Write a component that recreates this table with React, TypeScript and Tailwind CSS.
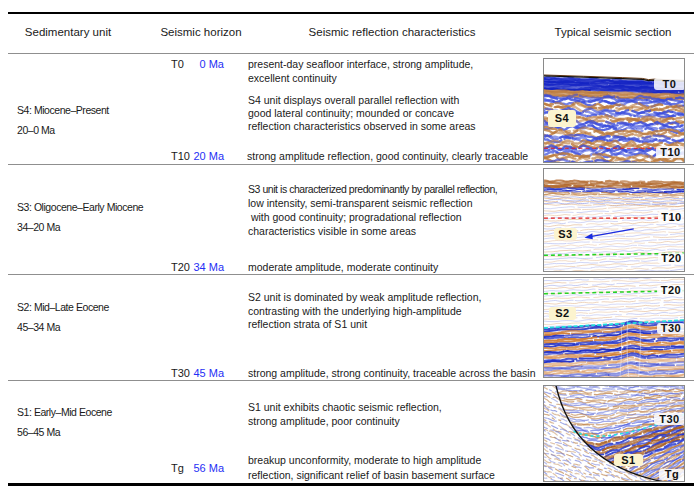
import React from "react";

// ---------- seismic texture helpers ----------
type Style = { c: string; o: number; w: number } | null;
type Seg = { d: string; c: string; o: number; w: number };

function rand(seed: number) {
  let s = seed >>> 0;
  return () => {
    s = (s + 0x6d2b79f5) >>> 0;
    let t = s;
    t = Math.imul(t ^ (t >>> 15), t | 1);
    t ^= t + Math.imul(t ^ (t >>> 7), t | 61);
    return ((t ^ (t >>> 14)) >>> 0) / 4294967296;
  };
}

function strata(
  r: () => number,
  o: {
    W: number;
    from: number;
    to: number;
    step: number;
    base: (y0: number, x: number) => number;
    style: (y0: number, k: number) => Style;
    jit: number;
    wave?: number;
    seg?: [number, number];
    gap?: [number, number];
  }
): Seg[] {
  const out: Seg[] = [];
  const [s0, s1] = o.seg ?? [14, 40];
  const [g0, g1] = o.gap ?? [0, 3];
  let k = 0;
  for (let y0 = o.from; y0 <= o.to; y0 += o.step, k++) {
    const st = o.style(y0, k);
    if (!st) continue;
    const ph = r() * 6.28;
    const fr = 0.15 + r() * 0.25;
    let x = -3 + r() * 3;
    let v = 0;
    while (x < o.W + 2) {
      const len = s0 + r() * (s1 - s0);
      const pts: string[] = [];
      for (let xx = x; xx <= Math.min(x + len, o.W + 3); xx += 2) {
        // smoothed random walk keeps the wiggles correlated
        v = v * 0.75 + (r() - 0.5) * o.jit;
        const y = o.base(y0, xx) + (o.wave ?? 0.8) * Math.sin(xx * fr + ph) + v;
        pts.push(`${xx.toFixed(1)} ${y.toFixed(1)}`);
      }
      if (pts.length > 1) out.push({ d: "M" + pts.join(" L"), c: st.c, o: st.o * (0.65 + r() * 0.35), w: st.w });
      x += len + g0 + r() * (g1 - g0);
    }
  }
  return out;
}

function Paths({ segs }: { segs: Seg[] }) {
  return (
    <>
      {segs.map((s, i) => (
        <path
          key={i}
          d={s.d}
          fill="none"
          stroke={s.c}
          strokeOpacity={s.o}
          strokeWidth={s.w}
          strokeLinecap="round"
          strokeLinejoin="round"
        />
      ))}
    </>
  );
}

const BLUE = "#3a4cdc";
const BLUE_D = "#1524c4";
const BROWN = "#bb7a3c";
const ORANGE = "#d07a2e";
const LBLUE = "#8b96e6";
const LBROWN = "#dca676";

// S4 section
const r1 = rand(11);
const seg1 = [
  ...strata(r1, {
    W: 142, from: 19, to: 38, step: 1.3,
    base: (y0, x) => y0 + x * 0.035 * (1 - (y0 - 17) / 120),
    style: (y0) => (y0 < 31 ? { c: BLUE_D, o: 1, w: 2.2 } : { c: BROWN, o: 0.9, w: 2.2 }),
    jit: 0.4, wave: 0.3, seg: [40, 90], gap: [0, 1],
  }),
  ...strata(r1, {
    W: 142, from: 38, to: 110, step: 2,
    base: (y0, x) => y0 + x * 0.02,
    style: (y0) => {
      const b = Math.floor((y0 - 38) / 6.5) % 2;
      return b === 0 ? { c: BLUE, o: 0.85, w: 2.4 } : { c: BROWN, o: 0.85, w: 2.4 };
    },
    jit: 1.6, wave: 1.5, seg: [8, 22], gap: [0, 3],
  }),
];

// S3 section
const r2 = rand(23);
const seg2 = [
  ...strata(r2, {
    W: 142, from: 36, to: 112, step: 2.6,
    base: (y0, x) => y0 - x * 0.035 + 4,
    style: (_y, k) => (k % 2 ? { c: LBROWN, o: 0.6, w: 0.9 } : { c: LBLUE, o: 0.55, w: 0.9 }),
    jit: 0.4, wave: 0.5, seg: [20, 60], gap: [0, 4],
  }),
  ...strata(r2, {
    W: 142, from: 12, to: 36, step: 1.5,
    base: (y0, x) => y0 + x * 0.01,
    style: (y0, k) =>
      y0 < 19 ? { c: "#b0662a", o: 0.95, w: 2 }
      : y0 < 23 ? { c: BLUE_D, o: 0.9, w: 1.4 }
      : y0 < 27 ? { c: BROWN, o: 0.8, w: 1.4 }
      : k % 2 ? { c: LBLUE, o: 0.75, w: 1 } : { c: LBROWN, o: 0.75, w: 1 },
    jit: 0.6, wave: 0.4, seg: [12, 50], gap: [0, 3],
  }),
];

// S2 section
const r3 = rand(37);
const bump = (x: number) => 3 * Math.exp(-(((x - 88) / 9) ** 2));
const seg3 = [
  ...strata(r3, {
    W: 142, from: 0, to: 54, step: 2.6,
    base: (y0, x) => y0 - x * 0.03 + 3,
    style: (_y, k) => (k % 2 ? { c: LBROWN, o: 0.6, w: 0.9 } : { c: LBLUE, o: 0.55, w: 0.9 }),
    jit: 0.4, wave: 0.4, seg: [20, 60], gap: [0, 4],
  }),
  ...strata(r3, {
    W: 142, from: 52, to: 112, step: 2,
    base: (y0, x) => y0 - x * 0.056 * (1 - (y0 - 51) / 150) - bump(x),
    style: (y0) => {
      const o = y0 > 86 ? 0.6 : 0.95;
      return Math.floor((y0 - 52) / 4) % 2 ? { c: ORANGE, o, w: 2 } : { c: BLUE_D, o, w: 2 };
    },
    jit: 0.5, wave: 0.4, seg: [20, 60], gap: [0, 2],
  }),
];

// S1 section
const r4 = rand(53);
const bowl = (y0: number, x: number) => (x >= 55 ? y0 - y0 * 0.0045 * (x - 55) : y0 - y0 * 0.003 * (55 - x));
const seg4l = strata(r4, {
  W: 142, from: -60, to: 97, step: 2.6,
  base: (y0, x) => y0 + x * 0.45,
  style: (_y, k) => (k % 2 ? { c: "#6f7bd8", o: 0.7, w: 1.2 } : { c: "#c08a56", o: 0.75, w: 1.2 }),
  jit: 1.2, wave: 1, seg: [3, 10], gap: [1, 4],
});
const seg4r = strata(r4, {
  W: 142, from: 0, to: 150, step: 2.1,
  base: bowl,
  style: (y0) => {
    const alt = Math.floor(y0 / 4.4) % 2;
    if (y0 < 45) return alt ? { c: BROWN, o: 0.7, w: 1.4 } : { c: "#5564d8", o: 0.65, w: 1.3 };
    if (y0 < 58 || y0 > 92) return alt ? { c: BROWN, o: 0.8, w: 1.6 } : { c: BLUE, o: 0.75, w: 1.5 };
    return alt ? { c: "#a85c1c", o: 0.95, w: 2.2 } : { c: "#2233cc", o: 0.9, w: 1.9 };
  },
  jit: 0.8, wave: 0.7, seg: [8, 30], gap: [0, 3],
});

function Tag({ className, children, yellow }: { className: string; children: React.ReactNode; yellow?: boolean }) {
  return (
    <div
      className={`absolute flex items-center justify-center rounded-[3px] text-[11px] font-bold leading-none tracking-[0.5px] text-[#111] ${
        yellow ? "bg-[#fcf4cf]" : "bg-white/85"
      } ${className}`}
    >
      {children}
    </div>
  );
}

function Section1() {
  return (
    <div className="relative w-[142px] h-[105px] border border-[#8a8a8a] overflow-hidden bg-white">
      <svg viewBox="0 0 142 105" preserveAspectRatio="none" className="block w-full h-full">
        <Paths segs={seg1} />
        <path d="M0 16.3 L40 17.6 L80 19 L100 19.8 L106 21 L112 20.5 L142 21.8" fill="none" stroke="#6b3a12" strokeWidth={1} />
        <path d="M0 17.2 L40 18.5 L80 19.9 L100 20.7 L106 22 L112 21.5 L142 22.8" fill="none" stroke="#111" strokeWidth={1.3} />
        <line x1={0} y1={91} x2={142} y2={91} stroke="#e41e1e" strokeWidth={1.2} strokeDasharray="4 3" />
      </svg>
      <Tag className="left-[110px] top-[19px] w-[31px] h-[12px]">T0</Tag>
      <Tag yellow className="left-[4px] top-[51px] w-[28px] h-[17px]">S4</Tag>
      <Tag className="left-[112px] top-[87px] w-[29px] h-[12px]">T10</Tag>
    </div>
  );
}

function Section2() {
  return (
    <div className="relative w-[142px] h-[104px] border border-[#8a8a8a] overflow-hidden bg-white">
      <svg viewBox="0 0 142 104" preserveAspectRatio="none" className="block w-full h-full">
        <Paths segs={seg2} />
        <line x1={0} y1={50} x2={142} y2={50} stroke="#e41e1e" strokeWidth={1.2} strokeDasharray="4 3" />
        <line x1={0} y1={88} x2={142} y2={86} stroke="#26d226" strokeWidth={1.6} strokeDasharray="4 3" />
        <line x1={91} y1={61} x2={47} y2={69} stroke="#1a2be0" strokeWidth={1.3} />
        <polygon points="41,70 49,65.5 49.5,71.5" fill="#1a2be0" />
      </svg>
      <Tag className="left-[114px] top-[42px] w-[27px] h-[12px]">T10</Tag>
      <Tag yellow className="left-[10px] top-[59px] w-[23px] h-[12px]">S3</Tag>
      <Tag className="left-[114px] top-[84px] w-[27px] h-[11px]">T20</Tag>
    </div>
  );
}

function Section3() {
  return (
    <div className="relative w-[142px] h-[101px] border border-[#8a8a8a] overflow-hidden bg-white">
      <svg viewBox="0 0 142 101" preserveAspectRatio="none" className="block w-full h-full">
        <Paths segs={seg3} />
        <path
          d="M78 44 Q80 70 77 101 M85 42 Q83 70 86 101 M97 44 Q99 70 96 101"
          fill="none"
          stroke="#fff"
          strokeOpacity={0.45}
          strokeWidth={1}
        />
        <line x1={0} y1={16} x2={142} y2={13} stroke="#26d226" strokeWidth={1.6} strokeDasharray="4 3" />
        <line x1={0} y1={51} x2={142} y2={43} stroke="#22dede" strokeWidth={1.8} strokeDasharray="4 2" />
      </svg>
      <Tag className="left-[113px] top-[7px] w-[28px] h-[11px]">T20</Tag>
      <Tag yellow className="left-[5px] top-[29px] w-[27px] h-[13px]">S2</Tag>
      <Tag className="left-[113px] top-[45px] w-[28px] h-[11px]">T30</Tag>
    </div>
  );
}

function Section4() {
  return (
    <div className="relative w-[142px] h-[97px] border border-[#8a8a8a] overflow-hidden bg-white">
      <svg viewBox="0 0 142 97" preserveAspectRatio="none" className="block w-full h-full">
        <defs>
          <clipPath id="s1-left">
            <path d="M0 0 L12 0 Q30 80 122 97 L0 97 Z" />
          </clipPath>
          <clipPath id="s1-right">
            <path d="M12 0 Q30 80 122 97 L142 97 L142 0 Z" />
          </clipPath>
        </defs>
        <g clipPath="url(#s1-left)">
          <Paths segs={seg4l} />
        </g>
        <g clipPath="url(#s1-right)">
          <Paths segs={seg4r} />
        </g>
        <path d="M30 46 C45 54 70 52 95 45 S130 34 142 29" fill="none" stroke="#22e0e0" strokeWidth={1.6} strokeDasharray="3 3" />
        <path d="M12 -1 Q30 80 122 98" fill="none" stroke="#111" strokeWidth={1.4} />
      </svg>
      <Tag className="left-[110px] top-[27px] w-[31px] h-[12px]">T30</Tag>
      <Tag yellow className="left-[70px] top-[68px] w-[29px] h-[12px]">S1</Tag>
      <Tag className="left-[115px] top-[83px] w-[26px] h-[11px]">Tg</Tag>
    </div>
  );
}

// ---------- table ----------
function Horizon({ name, age }: { name?: string; age?: string }) {
  return (
    <div className="w-[88px] shrink-0 flex justify-between pl-[11px] pr-[24px] text-[11px]">
      <span>{name}</span>
      <span className="text-[#1f30f5]">{age}</span>
    </div>
  );
}

function Lines({ lines }: { lines: string[] }) {
  return (
    <div className="whitespace-pre">
      {lines.map((l, i) => (
        <div key={i}>{l}</div>
      ))}
    </div>
  );
}

function Unit({ name, age, className }: { name: string; age: string; className: string }) {
  return (
    <div className={`w-[152px] shrink-0 pl-[9px] text-[10.5px] tracking-[-0.45px] leading-[20px] ${className}`}>
      <div>{name}</div>
      <div>{age}</div>
    </div>
  );
}

export default function App() {
  return (
    <div className="w-[700px] h-[492px] bg-white pt-[12px] pl-[8px] pr-[6px] font-['Liberation_Sans',Arial,sans-serif] text-[#1a1a1a]">
      <div className="border-t-2 border-black">
        {/* Header */}
        <div className="flex items-center h-[40px] border-b-[1.5px] border-[#8f8f8f] text-[11.5px] pb-[2px]">
          <div className="w-[120px] text-center">Sedimentary unit</div>
          <div className="w-[146px] text-center">Seismic horizon</div>
          <div className="w-[236px] text-center">Seismic reflection characteristics</div>
          <div className="w-[146px] ml-[30px] text-center">Typical seismic section</div>
        </div>

        {/* S4 */}
        <div className="flex h-[111px] border-b-[1.5px] border-[#8f8f8f]">
          <Unit name="S4: Miocene–Present" age="20–0 Ma" className="pt-[46px]" />
          <div className="flex-1 flex flex-col pt-[3px] text-[10.5px]">
            <div className="flex leading-[14px]">
              <Horizon name="T0" age="0 Ma" />
              <Lines lines={["present-day seafloor interface, strong amplitude,", "excellent continuity"]} />
            </div>
            <div className="flex mt-[9px] leading-[13px]">
              <Horizon />
              <Lines
                lines={[
                  "S4 unit displays overall parallel reflection with",
                  "good lateral continuity; mounded or concave",
                  "reflection characteristics observed in some areas",
                ]}
              />
            </div>
            <div className="flex mt-[16px] leading-[14px]">
              <Horizon name="T10" age="20 Ma" />
              <div className="whitespace-nowrap -ml-[1px]">strong amplitude reflection, good continuity, clearly traceable</div>
            </div>
          </div>
          <div className="w-[142px] shrink-0 mr-[9px] pt-[4px]">
            <Section1 />
          </div>
        </div>

        {/* S3 */}
        <div className="flex h-[110px] border-b-[1.5px] border-[#8f8f8f]">
          <Unit name="S3: Oligocene–Early Miocene" age="34–20 Ma" className="pt-[32px]" />
          <div className="flex-1 flex flex-col pt-[17px] text-[10.5px]">
            <div className="flex leading-[14px]">
              <Horizon />
              <div className="whitespace-pre">
                <div className="tracking-[-0.45px]">S3 unit is characterized predominantly by parallel reflection,</div>
                <div>low intensity, semi-transparent seismic reflection</div>
                <div> with good continuity; progradational reflection</div>
                <div>characteristics visible in some areas</div>
              </div>
            </div>
            <div className="flex mt-[22px] leading-[14px]">
              <Horizon name="T20" age="34 Ma" />
              <div className="whitespace-nowrap">moderate amplitude, moderate continuity</div>
            </div>
          </div>
          <div className="w-[142px] shrink-0 mr-[9px] pt-[3px]">
            <Section2 />
          </div>
        </div>

        {/* S2 */}
        <div className="flex h-[106px] border-b-[1.5px] border-[#8f8f8f]">
          <Unit name="S2: Mid–Late Eocene" age="45–34 Ma" className="pt-[22px]" />
          <div className="flex-1 flex flex-col pt-[16px] text-[10.5px]">
            <div className="flex leading-[13.5px]">
              <Horizon />
              <Lines
                lines={[
                  "S2 unit is dominated by weak amplitude reflection,",
                  "contrasting with the underlying high-amplitude",
                  "reflection strata of S1 unit",
                ]}
              />
            </div>
            <div className="flex mt-[34px] leading-[14px]">
              <Horizon name="T30" age="45 Ma" />
              <div className="whitespace-nowrap">strong amplitude, strong continuity, traceable across the basin</div>
            </div>
          </div>
          <div className="w-[142px] shrink-0 mr-[9px] pt-[2px]">
            <Section3 />
          </div>
        </div>

        {/* S1 */}
        <div className="flex h-[105px] border-b-[3px] border-black">
          <Unit name="S1: Early–Mid Eocene" age="56–45 Ma" className="pt-[21px]" />
          <div className="flex-1 flex flex-col pt-[19px] text-[10.5px]">
            <div className="flex leading-[14px]">
              <Horizon />
              <Lines lines={["S1 unit exhibits chaotic seismic reflection,", "strong amplitude, poor continuity"]} />
            </div>
            <div className="flex items-center mt-[25px] leading-[15px]">
              <Horizon name="Tg" age="56 Ma" />
              <Lines
                lines={[
                  "breakup unconformity, moderate to high amplitude",
                  "reflection, significant relief of basin basement surface",
                ]}
              />
            </div>
          </div>
          <div className="w-[142px] shrink-0 mr-[9px] pt-[4px]">
            <Section4 />
          </div>
        </div>
      </div>
    </div>
  );
}
